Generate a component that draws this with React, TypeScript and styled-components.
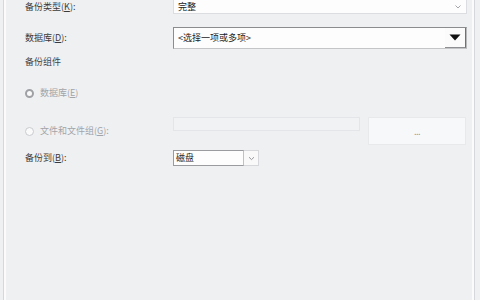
import styled, { createGlobalStyle } from 'styled-components';

const GlobalStyle = createGlobalStyle`
  html, body {
    margin: 0;
    padding: 0;
    background: #eff0f2;
    overflow: hidden;
  }
  body {
    font-family: "Noto Sans CJK SC", "Noto Sans", "Liberation Sans", sans-serif;
    font-size: 9px;
    color: #333;
  }
`;

const Frame = styled.div`
  width: 470px;
  height: 300px;
  margin: 0 3px 0 3px;
  border-left: 1px solid #d6d7da;
  border-right: 1px solid #d6d7da;
  box-shadow: inset 2px 0 0 #fbfbfc, inset -2px 0 0 #fbfbfc;
  background: #eff0f2;
  overflow: hidden;
`;

const Form = styled.div`
  display: flex;
  flex-direction: column;
  margin-top: -7px;
  padding-left: 21px;
`;

const Row = styled.div<{ $gap?: number; $height?: number; $align?: string }>`
  display: flex;
  align-items: ${({ $align }) => $align || 'center'};
  margin-top: ${({ $gap }) => $gap || 0}px;
  height: ${({ $height }) => ($height ? `${$height}px` : 'auto')};
`;

const Label = styled.span<{ $offset?: number }>`
  width: 148px;
  flex-shrink: 0;
  line-height: 12px;
  white-space: nowrap;
  color: #3a3a3a;
  transform: translateY(${({ $offset }) => $offset || 0}px);
`;

const SectionTitle = styled.span`
  line-height: 14px;
  color: #444;
`;

const Field = styled.div<{ $dark?: boolean; $height: number }>`
  box-sizing: border-box;
  width: 294px;
  height: ${({ $height }) => $height}px;
  display: flex;
  align-items: center;
  background: #fdfdfd;
  border: 1px solid ${({ $dark }) => ($dark ? '#8b8c8e' : '#dcdde0')};
  border-right-color: ${({ $dark }) => ($dark ? '#b8b9bb' : '#dcdde0')};
  border-bottom-color: ${({ $dark }) => ($dark ? '#c4c5c7' : '#dcdde0')};
  padding-left: 4px;
  color: #222;
`;

const FieldText = styled.span<{ $offset?: number }>`
  flex: 1;
  line-height: 12px;
  transform: translateY(${({ $offset }) => $offset || 0}px);
`;

const Chevron = styled.svg`
  width: 8px;
  height: 6px;
  margin-right: 4px;
  margin-top: 6px;
`;

const DropButton = styled.div`
  box-sizing: border-box;
  width: 21px;
  height: 100%;
  display: flex;
  align-items: center;
  justify-content: center;
  background: #fbfbfb;
  border-right: 1px solid #707174;
  border-bottom: 1px solid #8e8f92;
`;

const Radio = styled.span<{ $checked?: boolean }>`
  box-sizing: border-box;
  width: 9px;
  height: 9px;
  border-radius: 50%;
  margin: 0 6px 0 0;
  flex-shrink: 0;
  background: #fafafa;
  border: ${({ $checked }) => ($checked ? '2.5px solid #9fa1a5' : '1px solid #c9cbcf')};
`;

const RadioLabel = styled.label`
  display: flex;
  align-items: center;
  width: 148px;
  flex-shrink: 0;
  color: #a2a4a8;
  line-height: 12px;
  white-space: nowrap;
`;

const DisabledBox = styled.div`
  box-sizing: border-box;
  width: 187px;
  height: 14px;
  align-self: flex-start;
  background: #f1f2f4;
  border: 1px solid #e4e5e8;
`;

const BrowseButton = styled.div`
  box-sizing: border-box;
  width: 98px;
  height: 28px;
  margin-left: 8px;
  display: flex;
  align-items: center;
  justify-content: center;
  background: #f7f8f9;
  border: 1px solid #e8e9eb;
  color: #9a9ca0;
  letter-spacing: -0.5px;
`;

const SmallCombo = styled.div`
  display: flex;
  height: 16px;
`;

const ComboValue = styled.div`
  box-sizing: border-box;
  width: 71px;
  height: 16px;
  display: flex;
  align-items: center;
  padding-left: 2px;
  background: #fdfdfd;
  border: 1px solid #9a9b9e;
  border-right-color: #c0c1c4;
  color: #1c1c1c;
  line-height: 12px;
`;

const ComboArrow = styled.div`
  box-sizing: border-box;
  width: 15px;
  height: 16px;
  display: flex;
  align-items: center;
  justify-content: center;
  background: #f9f9fa;
  border: 1px solid #d6d7da;
  border-left: none;
`;

const SmallChevron = () => (
  <svg width="7" height="5" viewBox="0 0 7 5">
    <path d="M1 1.2 L3.5 3.6 L6 1.2" fill="none" stroke="#8a8c90" strokeWidth="0.9" />
  </svg>
);

export default function App() {
  return (
    <>
      <GlobalStyle />
      <Frame>
        <Form>
          <Row $height={21}>
            <Label $offset={3}>备份类型(<u>K</u>):</Label>
            <Field $height={21}>
              <FieldText $offset={3}>完整</FieldText>
              <Chevron viewBox="0 0 8 6">
                <path d="M1.5 1.5 L4 4 L6.5 1.5" fill="none" stroke="#9a9ca0" strokeWidth="0.9" />
              </Chevron>
            </Field>
          </Row>

          <Row $gap={13} $height={22}>
            <Label>数据库(<u>D</u>):</Label>
            <Field $dark $height={22}>
              <FieldText>&lt;选择一项或多项&gt;</FieldText>
              <DropButton>
                <svg width="12" height="7" viewBox="0 0 12 7">
                  <path d="M0.5 0.5 H11.5 L6 6.5 Z" fill="#111" />
                </svg>
              </DropButton>
            </Field>
          </Row>

          <Row $gap={6} $height={14}>
            <SectionTitle>备份组件</SectionTitle>
          </Row>

          <Row $gap={17} $height={14}>
            <RadioLabel>
              <Radio $checked />
              数据库(<u>E</u>)
            </RadioLabel>
          </Row>

          <Row $gap={17} $height={28}>
            <RadioLabel>
              <Radio />
              文件和文件组(<u>G</u>):
            </RadioLabel>
            <DisabledBox />
            <BrowseButton>...</BrowseButton>
          </Row>

          <Row $gap={5} $height={16}>
            <Label>备份到(<u>B</u>):</Label>
            <SmallCombo>
              <ComboValue>磁盘</ComboValue>
              <ComboArrow>
                <SmallChevron />
              </ComboArrow>
            </SmallCombo>
          </Row>
        </Form>
      </Frame>
    </>
  );
}
